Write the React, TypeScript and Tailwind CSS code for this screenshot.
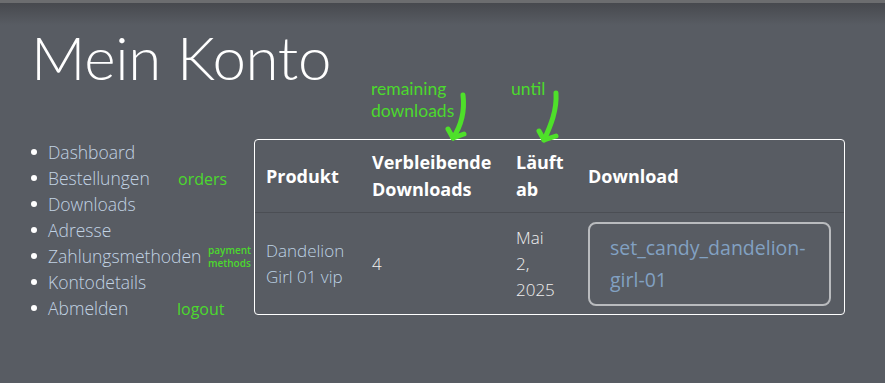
import React from 'react'

const navItems = ['Dashboard', 'Bestellungen', 'Downloads', 'Adresse', 'Zahlungsmethoden', 'Kontodetails', 'Abmelden']

function Arrow({ d, head }: { d: string; head: string }) {
  return (
    <>
      <path d={d} fill="none" stroke="#4ee02a" strokeWidth="5" strokeLinecap="round" strokeLinejoin="round" />
      <path d={head} fill="none" stroke="#4ee02a" strokeWidth="5" strokeLinecap="round" strokeLinejoin="round" />
    </>
  )
}

export default function App() {
  return (
    <div className="relative w-[885px] h-[383px] overflow-hidden bg-[#585c63] font-['Open_Sans',sans-serif]">
      {/* top bar + shadow */}
      <div className="absolute inset-x-0 top-0 h-[3px] bg-[#6c6d6f]" />
      <div className="absolute inset-x-0 top-[3px] h-[22px] bg-gradient-to-b from-[#47494e] to-transparent" />

      <div className="relative pl-[31px] pt-[22px]">
        <h1 className="font-['Lato',sans-serif] font-light text-[60px] leading-[70px] text-white tracking-[-0.3px]">Mein Konto</h1>

        <div className="flex items-start mt-[47px]">
          <ul className="w-[224px] pt-0">
            {navItems.map(item => (
              <li key={item} className="flex items-center h-[26px]">
                <span className="w-[6px] h-[6px] rounded-full bg-white mr-[11px]" />
                <span className="text-[17.5px] font-[350] text-[#c2d3e4] leading-[26px]">{item}</span>
              </li>
            ))}
          </ul>

          <div className="w-[591px] -ml-[1px] border border-white rounded-[4px] overflow-hidden">
            <table className="w-full table-fixed border-collapse text-left">
              <colgroup>
                <col className="w-[106px]" />
                <col className="w-[144px]" />
                <col className="w-[72px]" />
                <col />
              </colgroup>
              <thead>
                <tr className="border-b border-[#4b4e54]">
                  {['Produkt', 'Verbleibende Downloads', 'Läuft ab', 'Download'].map(h => (
                    <th key={h} className="px-[11px] py-[9px] text-[18px] leading-[27px] font-bold text-white align-middle">{h}</th>
                  ))}
                </tr>
              </thead>
              <tbody>
                <tr className="text-[17px] font-[350] leading-[26px] text-[#f0f0f0]">
                  <td className="pl-[11px] pr-[8px] align-middle text-[#bdd2e4]">Dandelion Girl 01 vip</td>
                  <td className="px-[11px] align-middle">4</td>
                  <td className="pl-[11px] pr-[16px] align-middle">Mai 2, 2025</td>
                  <td className="pl-[11px] pr-[13px] pt-[9px] pb-[8px] align-middle">
                    <div className="border-2 border-[#b9bbbe] rounded-[8px] px-[20px] py-[8px] text-[19.5px] font-normal leading-[32px] text-[#82a1c2]">
                      set_candy_dandelion-girl-01
                    </div>
                  </td>
                </tr>
              </tbody>
            </table>
          </div>
        </div>
      </div>

      {/* annotations */}
      <div className="absolute left-[371px] top-[78px] font-['Lato',sans-serif] text-[17.5px] leading-[22px] text-[#4cd92e]">remaining<br />downloads</div>
      <div className="absolute left-[511px] top-[78px] font-['Lato',sans-serif] text-[17.5px] leading-[22px] text-[#4cd92e]">until</div>
      <div className="absolute left-[178px] top-[168px] text-[16px] leading-[22px] text-[#4cd92e]">orders</div>
      <div className="absolute left-[208px] top-[244px] text-[10px] leading-[13px] font-semibold text-[#4cd92e]">payment<br />methods</div>
      <div className="absolute left-[177px] top-[298px] text-[16px] leading-[22px] text-[#4cd92e]">logout</div>

      <svg className="absolute left-0 top-0 pointer-events-none" width="885" height="383">
        <Arrow d="M463 95 C465 112 461 126 453 138" head="M448 129 L453 138 L464 134" />
        <Arrow d="M556 93 C557 110 551 125 544 140" head="M539 131 L544 140 L556 136" />
      </svg>
    </div>
  )
}
